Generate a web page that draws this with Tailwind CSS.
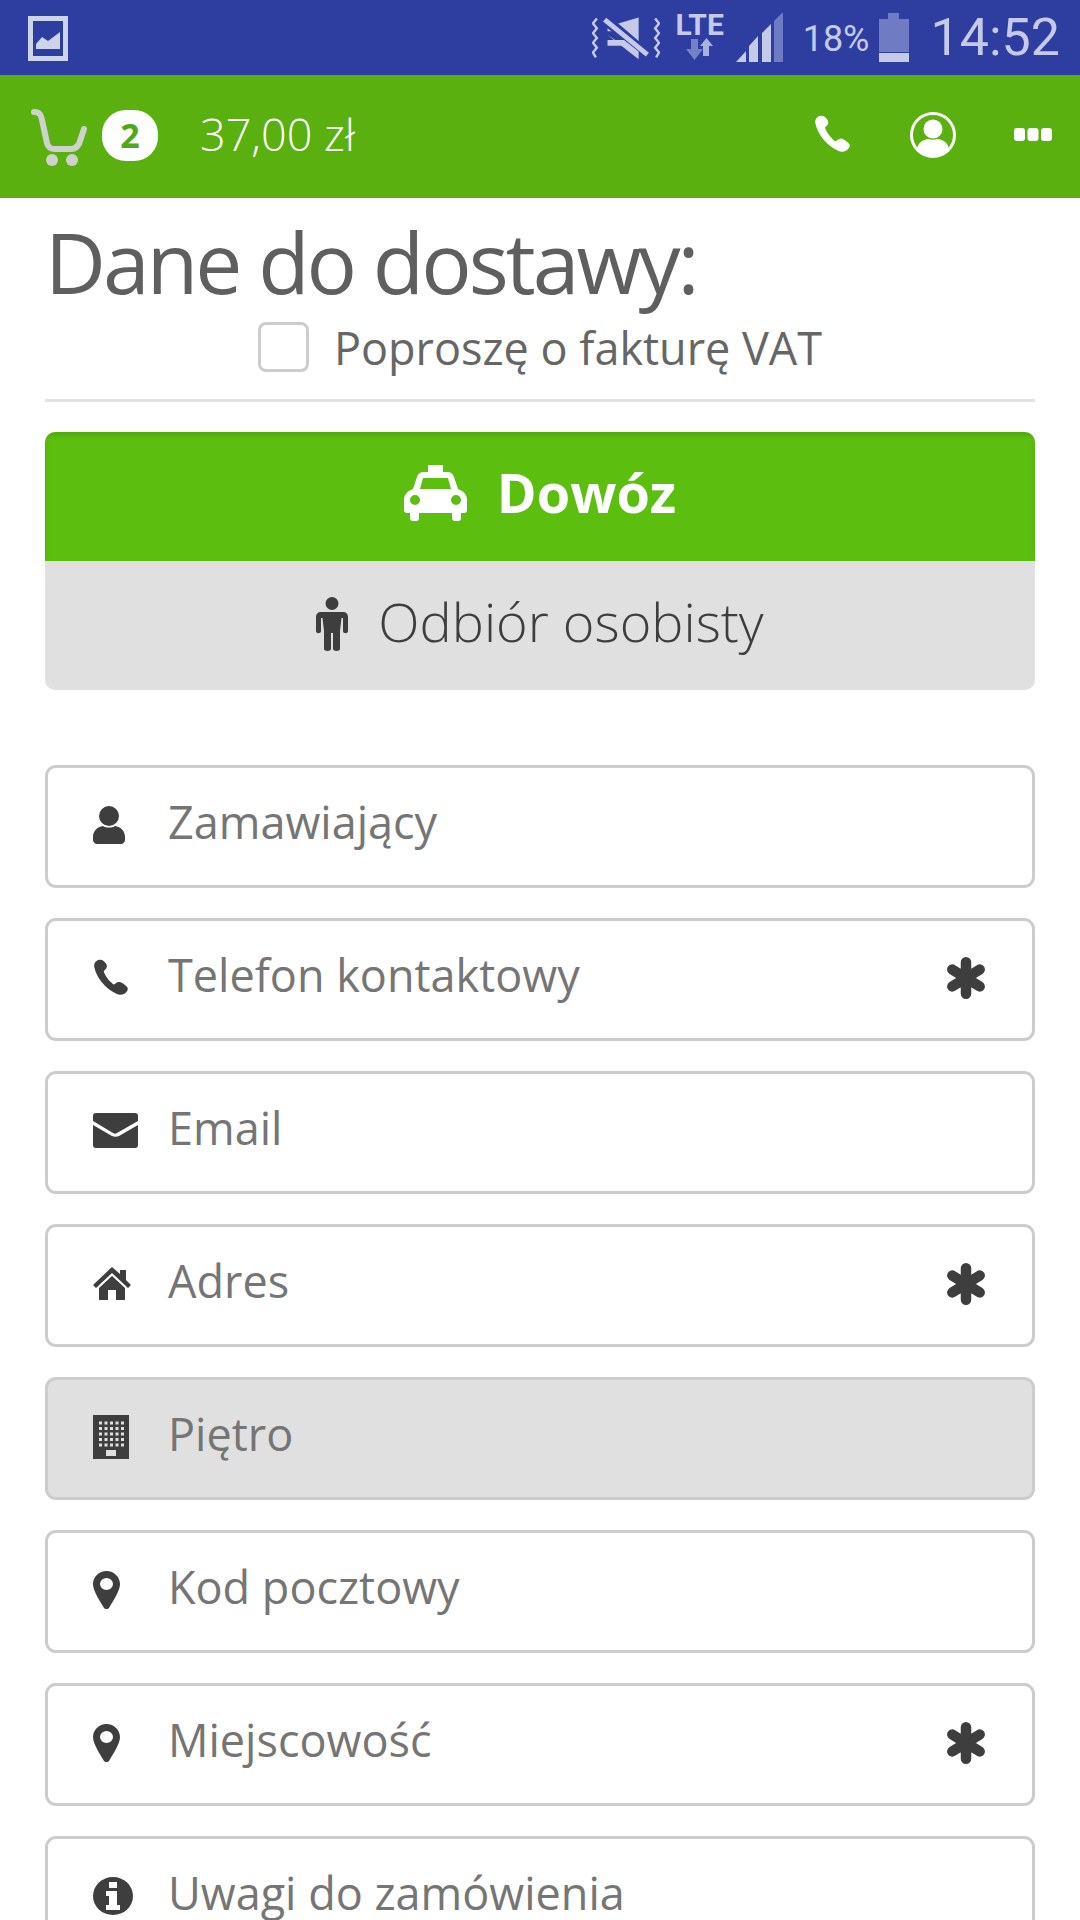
<!DOCTYPE html>
<html lang="pl">
<head>
    <meta charset="UTF-8">
    <meta name="viewport" content="width=device-width, initial-scale=1.0">
    <title>Dane do dostawy</title>
    <script src="https://cdn.jsdelivr.net/npm/@tailwindcss/browser@4"></script>
</head>
<body class="bg-white">
<div class="w-[1080px] h-[1920px] overflow-hidden font-['Open_Sans',sans-serif]">

    <!-- Android status bar -->
    <div class="h-[75px] bg-[#2e3ea0] flex items-center pl-[28px] pr-[20px] text-[#c5cae9]">
        <svg class="w-[40px] h-[45px] mt-[1px]" viewBox="0 0 40 45">
            <path fill="#ced3ec" fill-rule="evenodd" d="M0 0h40v45H0zM5 5v35h30V5z"/>
            <path fill="#ced3ec" d="M8 33v-5l6-7 6 4 12-9v17z"/>
        </svg>
        <div class="ml-auto flex items-center">
            <!-- muted vibrate -->
            <svg class="w-[68px] h-[48px] mt-[1px]" viewBox="0 0 70 48">
                <g fill="none" stroke="#c5cae9" stroke-width="2.5">
                    <path d="M5 4L1 9l4 5-4 5 4 5-4 5 4 5-4 5 3 5"/>
                    <path d="M65 4l4 5-4 5 4 5-4 5 4 5-4 5 4 5-3 5"/>
                </g>
                <path fill="#c5cae9" d="M16 17h4l-4-3zM48 3v24L27 9z"/>
                <path fill="#c5cae9" d="M16 21l32 25v-8L33 26H16zM16 21v11h17z"/>
                <path stroke="#c5cae9" stroke-width="5" d="M13 5l44 36"/>
            </svg>
            <div class="ml-[15px] w-[50px] flex flex-col items-center mt-[-3px]">
                <span class="font-['Roboto',sans-serif] font-bold text-[30px] leading-[26px]">LTE</span>
                <svg class="w-[28px] h-[22px]" viewBox="0 0 28 22">
                    <path fill="#7382c4" d="M0 11h5V1h7v10h5l-8.500 11z"/>
                    <path fill="#a9b2de" d="M14 8l6.500-8L27 8h-4v10h-6V8z"/>
                </svg>
            </div>
            <svg class="ml-[10px] w-[48px] h-[50px]" viewBox="0 0 48 50">
                <path fill="#c5cae9" d="M1 49l10-11v11zM14 49V33l9-10v26zM27 49V20l9-9v38z"/>
                <path fill="#6f7cc4" d="M39 49V8l9-9v50z"/>
            </svg>
            <span class="ml-[20px] font-['Roboto',sans-serif] text-[36px] leading-none mt-[2px]">18%</span>
            <svg class="ml-[9px] w-[30px] h-[49px]" viewBox="0 0 30 49">
                <path fill="#6f7cc4" d="M9 0h11v6h10v33H0V6h9z"/>
                <path fill="#c5cae9" d="M0 40h30v9H0z"/>
            </svg>
            <span class="ml-[22px] font-['Roboto',sans-serif] text-[52px] leading-none">14:52</span>
        </div>
    </div>

    <!-- App header -->
    <div class="h-[123px] bg-[#5ab00f] flex items-center pl-[30px] pr-[28px] text-white">
        <svg class="w-[58px] h-[60px] mb-[-2px]" viewBox="0 0 58 60">
            <g fill="none" stroke="#cfd2cc" stroke-width="6" stroke-linecap="round" stroke-linejoin="round">
                <path d="M4 4c6 0 7 3 8 8l5 23c1 4 3 6 8 6h16c4 0 6-2 8-5l5-15"/>
            </g>
            <circle cx="22" cy="52" r="6" fill="#cfd2cc"/>
            <circle cx="42" cy="52" r="6" fill="#cfd2cc"/>
        </svg>
        <span class="ml-[14px] w-[56px] h-[51px] rounded-[24px] bg-white text-[#4fa818] text-[34px] font-bold flex items-center justify-center mt-[-2px]">2</span>
        <span class="ml-[42px] text-[45px] font-light leading-none mt-[-7px]">37,00 zł</span>
        <div class="ml-auto flex items-center">
            <svg class="w-[37px] h-[38px] mt-[-5px] mr-[1px]" viewBox="0 0 36 38">
                <path fill="#fff" d="M5 1C2 2 0 5 1 9c2 9 10 21 23 27 4 2 9 0 11-4 1-3-1-4-5-7-3-2-5-2-7 0s-3 1-5-1c-3-3-6-7-7-10-1-2 0-2 2-4 1-2 1-3 0-5C11 2 9 0 5 1z"/>
            </svg>
            <svg class="ml-[58px] w-[46px] h-[46px] mt-[-3px]" viewBox="0 0 46 46">
                <circle cx="23" cy="23" r="21.5" fill="none" stroke="#fff" stroke-width="3"/>
                <circle cx="23" cy="17" r="9.5" fill="#fff"/>
                <path fill="#fff" d="M7 37c1-6 5-9 11-10 3 1 7 1 10 0 6 1 10 4 11 10-8 9-24 9-32 0z"/>
            </svg>
            <svg class="ml-[58px] w-[38px] h-[13px] mt-[-4px]" viewBox="0 0 38 13">
                <rect x="0" y="0" width="11" height="13" rx="3" fill="#fff"/>
                <rect x="13.500" y="0" width="11" height="13" rx="3" fill="#fff"/>
                <rect x="27" y="0" width="11" height="13" rx="3" fill="#fff"/>
            </svg>
        </div>
    </div>

    <!-- Page content -->
    <div class="px-[45px]">
        <h1 class="text-[84px] leading-[90px] text-[#5f5f5f] tracking-[-3px] mt-[19px] h-[90px]">Dane do dostawy:</h1>

        <div class="flex items-center justify-center h-[72px] pb-[1px] mt-[4px]">
            <span class="w-[51px] h-[50px] rounded-[8px] border-[3px] border-[#ccc] bg-white"></span>
            <span class="ml-[25px] text-[45px] leading-none text-[#666] mt-[1px]">Poproszę o fakturę VAT</span>
        </div>

        <div class="h-[3px] bg-[#e2e2e2] mt-[16px]"></div>

        <!-- Delivery toggle -->
        <div class="mt-[30px] rounded-[10px] overflow-hidden">
            <div class="h-[129px] bg-[#5cbf0f] shadow-[inset_0_4px_5px_rgba(0,0,0,0.12)] flex items-center justify-center text-white">
                <svg class="w-[63px] h-[56px] mt-[-7px]" viewBox="0 0 63 56">
                    <path fill="#fff" fill-rule="evenodd" d="M24 0h15v7h4c4 0 6 2 7 5l4 12c5 2 9 5 9 11v10c0 2-1 3-3 3h-3v5c0 2-1 3-3 3h-3c-2 0-3-1-3-3v-5H15v5c0 2-1 3-3 3H9c-2 0-3-1-3-3v-5H3c-2 0-3-1-3-3V35c0-6 4-9 9-11l4-12c1-3 3-5 7-5h4zM19 13l-3 11h31l-3-11zM11 30a5 5 0 1 0 0 10 5 5 0 0 0 0-10zM52 30a5 5 0 1 0 0 10 5 5 0 0 0 0-10z"/>
                </svg>
                <span class="ml-[30px] text-[54px] font-bold leading-none mt-[-10px]">Dowóz</span>
            </div>
            <div class="h-[129px] bg-[#e0e0e0] flex items-center justify-center text-[#3e3e3e]">
                <svg class="w-[32px] h-[54px] mt-[-3px]" viewBox="0 0 32 54">
                    <circle cx="16" cy="6.500" r="6.500" fill="#3e3e3e"/>
                    <path fill="#3e3e3e" d="M5 15h22c3 0 5 2 5 5v14c0 3-5 3-5 0V21h-1.500L24 34v18c0 2.500-7 2.500-7 0V36h-2v16c0 2.500-7 2.500-7 0V34L6.500 21H5v13c0 3-5 3-5 0V20c0-3 2-5 5-5z"/>
                </svg>
                <span class="ml-[30px] text-[54px] font-light leading-none mt-[-9px]">Odbiór osobisty</span>
            </div>
        </div>

        <!-- Form fields -->
        <div class="mt-[75px] flex flex-col gap-[30px] text-[45px] text-[#757575]">
            <div class="h-[123px] rounded-[11px] border-[3px] border-[#ccc] bg-white flex items-center pl-[45px] pr-[46px] pb-[4px]">
                <span class="w-[75px] shrink-0">
                    <svg class="w-[32px] h-[38px]" viewBox="0 0 32 38">
                        <circle cx="16" cy="10" r="10" fill="#3e3e3e"/>
                        <path fill="#3e3e3e" d="M10 20c3 2 9 2 12 0 6 1 10 5 10 11v3c0 2-2 4-4 4H4c-2 0-4-2-4-4v-3c0-6 4-10 10-11z"/>
                    </svg>
                </span>
                <span class="leading-none mt-[-6px]">Zamawiający</span>
            </div>

            <div class="h-[123px] rounded-[11px] border-[3px] border-[#ccc] bg-white flex items-center pl-[45px] pr-[46px] pb-[4px]">
                <span class="w-[75px] shrink-0">
                    <svg class="w-[36px] h-[37px]" viewBox="0 0 36 38">
                        <path fill="#3e3e3e" d="M5 1C2 2 0 5 1 9c2 9 10 21 23 27 4 2 9 0 11-4 1-3-1-4-5-7-3-2-5-2-7 0s-3 1-5-1c-3-3-6-7-7-10-1-2 0-2 2-4 1-2 1-3 0-5C11 2 9 0 5 1z"/>
                    </svg>
                </span>
                <span class="leading-none mt-[-6px]">Telefon kontaktowy</span>
                <svg class="ml-auto w-[40px] h-[42px]" viewBox="0 0 38 40">
                    <path stroke="#3e3e3e" stroke-width="10" stroke-linecap="round" d="M19 5v30M6 12l26 16M32 12L6 28"/>
                </svg>
            </div>

            <div class="h-[123px] rounded-[11px] border-[3px] border-[#ccc] bg-white flex items-center pl-[45px] pr-[46px] pb-[4px]">
                <span class="w-[75px] shrink-0">
                    <svg class="w-[45px] h-[35px]" viewBox="0 0 45 35">
                        <path fill="#3e3e3e" d="M3 0h39c2 0 3 1 3 3v5L24 20c-2 1-2 1-4 0L0 8V3c0-2 1-3 3-3z"/>
                        <path fill="#3e3e3e" d="M0 12l19 11c2 1 5 1 7 0l19-11v20c0 2-1 3-3 3H3c-2 0-3-1-3-3z"/>
                    </svg>
                </span>
                <span class="leading-none mt-[-6px]">Email</span>
            </div>

            <div class="h-[123px] rounded-[11px] border-[3px] border-[#ccc] bg-white flex items-center pl-[45px] pr-[46px] pb-[4px]">
                <span class="w-[75px] shrink-0">
                    <svg class="w-[38px] h-[33px]" viewBox="0 0 38 33">
                        <path fill="#3e3e3e" d="M19 0l8 7V3h6v10l5 5-3 3L19 6 3 21l-3-3z"/>
                        <path fill="#3e3e3e" d="M19 9l13 12v12H23V23h-8v10H6V21z"/>
                    </svg>
                </span>
                <span class="leading-none mt-[-6px]">Adres</span>
                <svg class="ml-auto w-[40px] h-[42px]" viewBox="0 0 38 40">
                    <path stroke="#3e3e3e" stroke-width="10" stroke-linecap="round" d="M19 5v30M6 12l26 16M32 12L6 28"/>
                </svg>
            </div>

            <div class="h-[123px] rounded-[11px] border-[3px] border-[#ccc] bg-[#e0e0e0] flex items-center pl-[45px] pr-[46px] pb-[4px]">
                <span class="w-[75px] shrink-0">
                    <svg class="w-[36px] h-[44px]" viewBox="0 0 36 44">
                        <path fill="#3e3e3e" d="M0 0h36v44H0z"/>
                        <g stroke="#e0e0e0" stroke-width="3" stroke-dasharray="3 2.500">
                            <path d="M6 8h25M6 13.500h25M6 19h25M6 24.500h25M6 30h25"/>
                        </g>
                        <path fill="#e0e0e0" d="M13 35h10v6H13z"/>
                    </svg>
                </span>
                <span class="leading-none mt-[-6px]">Piętro</span>
            </div>

            <div class="h-[123px] rounded-[11px] border-[3px] border-[#ccc] bg-white flex items-center pl-[45px] pr-[46px] pb-[4px]">
                <span class="w-[75px] shrink-0">
                    <svg class="w-[27px] h-[38px]" viewBox="0 0 27 38">
                        <path fill="#3e3e3e" fill-rule="evenodd" d="M13.500 0C6 0 0 6 0 13c0 7 7 17 11 24 1 1.500 4 1.500 5 0 4-7 11-17 11-24C27 6 21 0 13.500 0zM13.500 7a6.500 6 0 1 1 0 12 6.500 6 0 0 1 0-12z"/>
                    </svg>
                </span>
                <span class="leading-none mt-[-6px]">Kod pocztowy</span>
            </div>

            <div class="h-[123px] rounded-[11px] border-[3px] border-[#ccc] bg-white flex items-center pl-[45px] pr-[46px] pb-[4px]">
                <span class="w-[75px] shrink-0">
                    <svg class="w-[27px] h-[38px]" viewBox="0 0 27 38">
                        <path fill="#3e3e3e" fill-rule="evenodd" d="M13.500 0C6 0 0 6 0 13c0 7 7 17 11 24 1 1.500 4 1.500 5 0 4-7 11-17 11-24C27 6 21 0 13.500 0zM13.500 7a6.500 6 0 1 1 0 12 6.500 6 0 0 1 0-12z"/>
                    </svg>
                </span>
                <span class="leading-none mt-[-6px]">Miejscowość</span>
                <svg class="ml-auto w-[40px] h-[42px]" viewBox="0 0 38 40">
                    <path stroke="#3e3e3e" stroke-width="10" stroke-linecap="round" d="M19 5v30M6 12l26 16M32 12L6 28"/>
                </svg>
            </div>

            <div class="h-[123px] rounded-[11px] border-[3px] border-[#ccc] bg-white flex items-center pl-[45px] pr-[46px] pb-[4px]">
                <span class="w-[75px] shrink-0">
                    <svg class="w-[40px] h-[38px]" viewBox="0 0 40 38">
                        <ellipse cx="20" cy="19" rx="20" ry="19" fill="#3e3e3e"/>
                        <path fill="#fff" d="M16 5h8v6h-8zM13 14h11v14h3v5H13v-5h3v-9h-3z"/>
                    </svg>
                </span>
                <span class="leading-none mt-[-6px]">Uwagi do zamówienia</span>
            </div>
        </div>
    </div>
</div>
</body>
</html>
